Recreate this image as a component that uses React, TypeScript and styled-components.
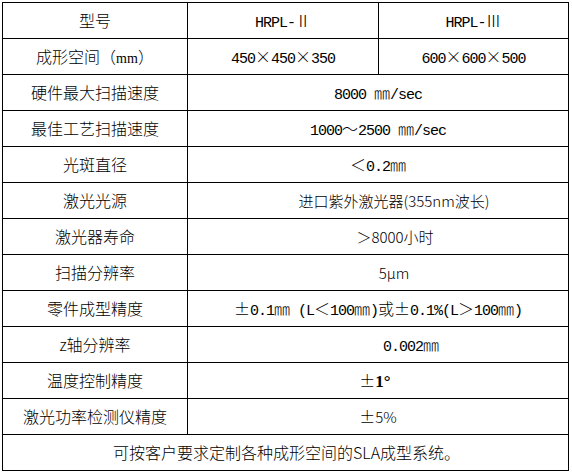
import React from "react";
import styled, { createGlobalStyle, css } from "styled-components";

const Global = createGlobalStyle`
  html, body { margin: 0; padding: 0; background: #fff; }
  body { padding: 2px; color: #000; }
`;

const Grid = styled.div`
  display: grid;
  grid-template-columns: 185px 191px 190px;
  grid-auto-rows: 36px;
  width: 567px;
  box-sizing: border-box;
  border-left: 1px solid #000;
  border-top: 1px solid #000;
`;

type Kind = "label" | "mono" | "sans" | "serif";

const fonts: Record<Kind, ReturnType<typeof css>> = {
  label: css`
    font-family: "Noto Sans CJK SC", sans-serif;
    font-size: 16px;
    font-weight: 300;
  `,
  mono: css`
    font-family: "Liberation Mono", "Noto Sans CJK SC", monospace;
    font-size: 15px;
    letter-spacing: -1px;
  `,
  sans: css`
    font-family: "Noto Sans CJK SC", sans-serif;
    font-size: 15px;
    font-weight: 300;
  `,
  serif: css`
    font-family: "Liberation Serif", "Noto Sans CJK SC", serif;
    font-size: 17px;
    font-weight: bold;
  `,
};

const Cell = styled.div<{ $span?: number; $kind: Kind; $shift?: number }>`
  grid-column: span ${(p) => p.$span ?? 1};
  box-sizing: border-box;
  border-right: 1px solid #000;
  border-bottom: 1px solid #000;
  text-align: center;
  line-height: 35px;
  white-space: nowrap;
  overflow: hidden;
  padding-left: ${(p) => Math.max(0, (p.$shift ?? 0) * 2)}px;
  padding-right: ${(p) => Math.max(0, -(p.$shift ?? 0) * 2)}px;
  ${(p) => fonts[p.$kind]}
`;

const W = styled.span`
  font-family: "Noto Sans CJK SC", sans-serif;
  font-size: 16px;
  font-weight: 300;
  letter-spacing: 0;
`;

const Small = styled.span`
  font-family: "Liberation Serif", serif;
  font-size: 14px;
`;

export default function App() {
  return (
    <>
      <Global />
      <Grid>
        <Cell $kind="label">型号</Cell>
        <Cell $kind="mono">HRPL-<W>Ⅱ</W></Cell>
        <Cell $kind="mono">HRPL-<W>Ⅲ</W></Cell>

        <Cell $kind="label">
          成形空间（<Small>mm</Small>）
        </Cell>
        <Cell $kind="mono">
          450<W>×</W>450<W>×</W>350
        </Cell>
        <Cell $kind="mono">
          600<W>×</W>600<W>×</W>500
        </Cell>

        <Cell $kind="label">硬件最大扫描速度</Cell>
        <Cell $kind="mono" $span={2}>
          8000{" "}<W>㎜</W>/sec
        </Cell>

        <Cell $kind="label">最佳工艺扫描速度</Cell>
        <Cell $kind="mono" $span={2}>
          1000<W>～</W>2500{" "}<W>㎜</W>/sec
        </Cell>

        <Cell $kind="label">光斑直径</Cell>
        <Cell $kind="mono" $span={2}>
          <W>＜</W>0.2<W>㎜</W>
        </Cell>

        <Cell $kind="label">激光光源</Cell>
        <Cell $kind="sans" $span={2} $shift={16}>
          进口紫外激光器(355nm波长)
        </Cell>

        <Cell $kind="label">激光器寿命</Cell>
        <Cell $kind="sans" $span={2} $shift={17}>
          ＞8000小时
        </Cell>

        <Cell $kind="label">扫描分辨率</Cell>
        <Cell $kind="sans" $span={2} $shift={16}>
          5μm
        </Cell>

        <Cell $kind="label">零件成型精度</Cell>
        <Cell $kind="mono" $span={2}>
          <W>±</W>0.1<W>㎜</W>{" "}(L<W>＜</W>100<W>㎜</W>)<W>或±</W>0.1%(L<W>＞</W>100<W>㎜</W>)
        </Cell>

        <Cell $kind="label">z轴分辨率</Cell>
        <Cell $kind="mono" $span={2} $shift={33}>
          0.002<W>㎜</W>
        </Cell>

        <Cell $kind="label">温度控制精度</Cell>
        <Cell $kind="serif" $span={2} $shift={-3}>
          <W>±</W>1°
        </Cell>

        <Cell $kind="label">激光功率检测仪精度</Cell>
        <Cell $kind="sans" $span={2}>
          <W>±</W>5%
        </Cell>

        <Cell $kind="label" $span={3} $shift={1}>
          可按客户要求定制各种成形空间的SLA成型系统。
        </Cell>
      </Grid>
    </>
  );
}
